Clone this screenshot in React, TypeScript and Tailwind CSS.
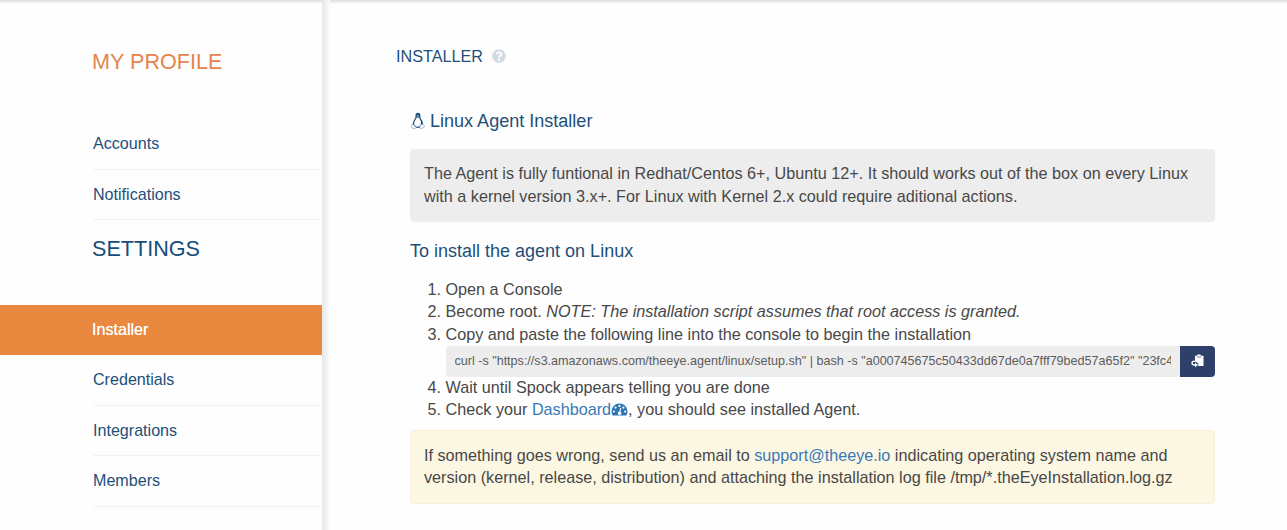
import { FaQuestionCircle } from "react-icons/fa";

function NavItem({ label, active = false }: { label: string; active?: boolean }) {
  if (active) {
    return (
      <a className="flex h-[50px] items-center bg-[#e9883f] pb-[2px] pl-[92px] text-[16.1px] text-white [text-shadow:0_0_0.6px_#fff]">
        {label}
      </a>
    );
  }
  return (
    <a className="ml-[93px] flex h-[50.5px] items-center border-b border-[#f2f2f2] pb-px text-[16.1px] text-[#1e4f79]">
      {label}
    </a>
  );
}

function PenguinIcon() {
  return (
    <svg width="16" height="18" viewBox="0 0 16 18" fill="none">
      <path
        d="M8 .7C6 .7 5.300 2.200 5.500 4.200c.1 1.600-.8 2.500-1.500 4-.7 1.500-1.500 3-1.400 4.800l2.200 2.200c1.800 1 4 1 5.900 0l2.400-2.200c.2-2.200-.7-4-1.500-5.200-.9-1.400-1.200-2-1.200-3.800C10.500 1.900 9.800.7 8 .7z"
        fill="#1e4f79"
      />
      <path
        d="M6.600 5.200c.8.800 1.700.800 2.500 0 .2 1.500 1.200 2.600 1.700 4.100.4 1.300.3 2.500-.2 3.300-.6 1.500-1.300 2.200-2.700 2.200s-2.900-.9-3.600-2.400c-.5-1.100.3-2.700.8-4 .6-1.100 1.400-1.900 1.500-3.200z"
        fill="#fefefe"
      />
      <path d="M6.600 3.900l1.300-.6 1.200.6-1.200.8z" fill="#dce4ea" />
      <path
        d="M3 12.300l-1.600 1.200.2 2.300 3.200 1.100 1.300-1.300zM12.600 12.300l1.900 1.500-.6 1.500-3 1.600-1-1.300.5-2.600z"
        fill="#fefefe"
        stroke="#8ba3b7"
        strokeWidth="0.7"
      />
    </svg>
  );
}

function DashboardIcon() {
  return (
    <svg className="inline align-[-1px]" width="17" height="13" viewBox="0 0 17 13">
      <path d="M8.500.5A8 8 0 0 0 .5 8.500c0 1.500.4 2.800 1.200 4h13.600c.8-1.200 1.200-2.500 1.200-4a8 8 0 0 0-8-8z" fill="#2f73b3" />
      <g fill="#fefefe">
        <circle cx="8.500" cy="2.900" r="1.100" />
        <circle cx="4.600" cy="4.600" r="1.100" />
        <circle cx="12.400" cy="4.600" r="1.100" />
        <circle cx="2.900" cy="8.500" r="1.100" />
        <circle cx="14.100" cy="8.500" r="1.100" />
        <path d="M9.300 4.800l1 .3-.9 3.600a1.700 1.700 0 1 1-1-.2z" />
      </g>
    </svg>
  );
}

function PasteIcon() {
  return (
    <svg width="14" height="14" viewBox="0 0 14 14" fill="none">
      <path d="M4 1.700h2L6.500.5h3l.5 1.200h2.500V12H7.300V9.600L5 7.800 4 8z" fill="#fff" />
      <path d="M6 3h4.200" stroke="#2e4069" strokeWidth="0.7" />
      <path d="M4 7.300C2 6.800.8 8 1 9.300c.2 1.400 1.500 1.700 3 1.700" stroke="#fff" strokeWidth="1.300" />
      <path d="M4 8.600L7 11l-3 2.300z" fill="#fff" />
    </svg>
  );
}

export default function App() {
  return (
    <div className="flex h-[530px] w-full overflow-hidden bg-[#fefefe] font-['Liberation_Sans',Arial,sans-serif] text-[#484848] shadow-[inset_0_5px_3px_-3px_#dedede]">
      <aside className="w-[322px] shrink-0">
        <h2 className="ml-[92px] pt-[46px] text-[21.6px] leading-8 text-[#e6854b]">MY PROFILE</h2>
        <nav className="mt-[41px]">
          <NavItem label="Accounts" />
          <NavItem label="Notifications" />
        </nav>
        <h2 className="ml-[92px] pt-[13px] text-[21.6px] leading-8 text-[#164d7a]">SETTINGS</h2>
        <nav className="mt-10">
          <NavItem label="Installer" active />
          <NavItem label="Credentials" />
          <NavItem label="Integrations" />
          <NavItem label="Members" />
        </nav>
      </aside>
      <div className="w-2 shrink-0 bg-linear-to-r from-[#e9e9e9] via-[#f0f0f0] to-[#fefefe]" />
      <main className="ml-20 w-[805px] shrink-0">
        <h1 className="-ml-[14px] flex items-center gap-[9px] pt-[44px] text-[16.2px] leading-6 text-[#1e4f79]">
          INSTALLER
          <FaQuestionCircle className="size-[14px] text-[#d3dae1]" />
        </h1>
        <h3 className="mt-[41px] flex items-center gap-1 text-[18.05px] leading-6 text-[#1e4f79]">
          <PenguinIcon />
          Linux Agent Installer
        </h3>
        <p className="mt-4 h-[73px] rounded bg-[#ededed] px-[14px] py-[13.4px] text-[16.22px] leading-[22.7px] whitespace-nowrap">
          The Agent is fully funtional in Redhat/Centos 6+, Ubuntu 12+. It should works out of the box on every Linux
          <br />
          with a kernel version 3.x+. For Linux with Kernel 2.x could require aditional actions.
        </p>
        <h3 className="mt-[17px] text-[18px] leading-6 text-[#1e4f79]">To install the agent on Linux</h3>
        <ol className="mt-[14.6px] list-decimal pl-[35.5px] text-[16.2px] leading-[22.7px]">
          <li>Open a Console</li>
          <li>
            Become root. <em>NOTE: The installation script assumes that root access is granted.</em>
          </li>
          <li>
            Copy and paste the following line into the console to begin the installation
            <div className="mb-[-1px] flex h-[31px]">
              <div className="flex flex-1 items-center overflow-hidden rounded-l bg-[#ededed] px-[9px]">
                <span className="w-full overflow-hidden text-[12.57px] whitespace-nowrap text-[#5c5c5c]">
                  curl -s "https://s3.amazonaws.com/theeye.agent/linux/setup.sh" | bash -s "a000745675c50433dd67de0a7fff79bed57a65f2" "23fc4
                </span>
              </div>
              <button className="flex w-[35px] items-center justify-center rounded-r bg-[#2e4069]">
                <PasteIcon />
              </button>
            </div>
          </li>
          <li>Wait until Spock appears telling you are done</li>
          <li>
            Check your{" "}
            <a className="text-[#3a79b7]">
              Dashboard
              <DashboardIcon />
            </a>
            , you should see installed Agent.
          </li>
        </ol>
        <p className="mt-[8.4px] h-[74px] rounded border border-[#f8f0d9] bg-[#fcf7e3] px-[13px] py-[13px] text-[16.22px] leading-[22.7px] whitespace-nowrap">
          If something goes wrong, send us an email to <a className="text-[#3a79b7]">support@theeye.io</a> indicating operating system name and
          <br />
          version (kernel, release, distribution) and attaching the installation log file /tmp/*.theEyeInstallation.log.gz
        </p>
      </main>
    </div>
  );
}
